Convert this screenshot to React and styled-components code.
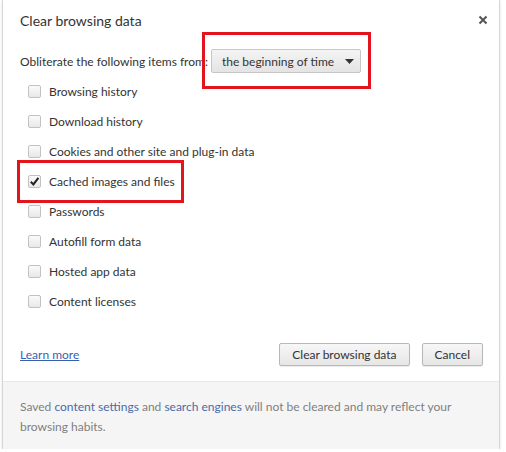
import React from 'react'
import styled, { createGlobalStyle } from 'styled-components'

const GlobalStyle = createGlobalStyle`
    body{
        margin: 0;
        background: #ffffff;
        font-family: Lato, "Open Sans", sans-serif;
    }
`

const items = [
    { label: 'Browsing history' },
    { label: 'Download history' },
    { label: 'Cookies and other site and plug-in data' },
    { label: 'Cached images and files', checked: true, marked: true },
    { label: 'Passwords' },
    { label: 'Autofill form data' },
    { label: 'Hosted app data' },
    { label: 'Content licenses' },
]

const App = () => {
    return (
        <>
            <GlobalStyle />
            <Dialog>
                <Header>
                    <h1>Clear browsing data</h1>
                    <Close aria-label="close">
                        <svg width="10" height="10" viewBox="0 0 10 10">
                            <path d="M1.5 1.5 L8.5 8.5 M8.5 1.5 L1.5 8.5" stroke="#555" strokeWidth="2" />
                        </svg>
                    </Close>
                </Header>
                <FromRow>
                    <span>Obliterate the following items from:</span>
                    <Marked>
                        <Select>
                            the beginning of time
                            <svg width="9" height="5" viewBox="0 0 9 5">
                                <path d="M0 0 L9 0 L4.5 5 Z" fill="#333" />
                            </svg>
                        </Select>
                        <Highlight $top={-17} $left={-9} $right={-10} $bottom={-16} />
                    </Marked>
                </FromRow>
                <List>
                    {items.map((item) => (
                        <Row key={item.label}>
                            <Marked>
                                <Box $checked={item.checked}>
                                    {item.checked && (
                                        <svg width="11" height="11" viewBox="0 0 11 11">
                                            <path d="M1.8 5.8 L4.4 8.4 L9.4 1.8" stroke="#222" strokeWidth="2" fill="none" />
                                        </svg>
                                    )}
                                </Box>
                                <span>{item.label}</span>
                                {item.marked && <Highlight $top={-14} $left={-11} $right={-9} $bottom={-14} />}
                            </Marked>
                        </Row>
                    ))}
                </List>
                <Actions>
                    <a href="#">Learn more</a>
                    <Buttons>
                        <Button>Clear browsing data</Button>
                        <Button>Cancel</Button>
                    </Buttons>
                </Actions>
                <Footer>
                    <span>Saved </span><a href="#">content settings</a><span> and </span><a href="#">search engines</a><span> will not be cleared and may reflect your browsing habits.</span>
                </Footer>
            </Dialog>
        </>
    )
}

export default App

const Dialog = styled.div`
    margin-left: 3px;
    width: 496px;
    height: 449px;
    background: #fff;
    box-shadow: 0 0 0 1px #d6d6d6, 0 1px 3px rgba(0,0,0,0.25);
    display: flex;
    flex-direction: column;
    color: #333;
    font-size: 12px;
    overflow: hidden;
`

const Header = styled.div`
    display: flex;
    justify-content: space-between;
    align-items: flex-start;
    padding: 10px 11px 0 17px;
    h1{
        margin: 0;
        font-size: 14px;
        font-weight: 400;
        line-height: 22px;
        color: #333;
    }
`

const Close = styled.span`
    display: flex;
    padding-top: 5px;
`

const FromRow = styled.div`
    display: flex;
    align-items: center;
    gap: 3px;
    padding: 17px 17px 0;
    white-space: nowrap;
`

const Marked = styled.div`
    position: relative;
    display: flex;
    align-items: center;
    gap: 8px;
`

const Highlight = styled.span`
    position: absolute;
    top: ${p => p.$top}px;
    left: ${p => p.$left}px;
    right: ${p => p.$right}px;
    bottom: ${p => p.$bottom}px;
    border: 3px solid #e3141c;
    pointer-events: none;
`

const Select = styled.div`
    display: flex;
    align-items: center;
    justify-content: space-between;
    flex-shrink: 0;
    box-sizing: border-box;
    width: 150px;
    height: 24px;
    padding: 0 6px 0 10px;
    border: 1px solid #c6c6c6;
    border-radius: 2px;
    background: linear-gradient(#f4f4f4, #e4e4e4);
    color: #333;
    white-space: nowrap;
`

const List = styled.div`
    display: flex;
    flex-direction: column;
    padding: 3px 0 0 25px;
`

const Row = styled.div`
    height: 30px;
    display: flex;
    align-items: center;
`

const Box = styled.span`
    box-sizing: border-box;
    width: 13px;
    height: 13px;
    border: 1px solid #c2c2c2;
    border-radius: 2px;
    background: linear-gradient(#fafafa, #e8e8e8);
    display: flex;
    align-items: center;
    justify-content: center;
`

const Actions = styled.div`
    display: flex;
    justify-content: space-between;
    align-items: center;
    padding: 27px 16px 15px 17px;
    a{
        color: #3a5fae;
        text-decoration: underline;
    }
`

const Buttons = styled.div`
    display: flex;
    gap: 12px;
`

const Button = styled.button`
    height: 23px;
    padding: 0 12px;
    border: 1px solid #b8b8b8;
    border-radius: 2px;
    background: linear-gradient(#f7f7f7, #e6e6e6);
    box-shadow: 0 1px 1px rgba(0,0,0,0.08);
    font-family: inherit;
    font-size: 12px;
    color: #333;
`

const Footer = styled.div`
    flex: 1;
    background: #f5f5f5;
    border-top: 1px solid #e8e8e8;
    padding: 15px 30px 0 17px;
    line-height: 20px;
    color: #7f7f7f;
    a{
        color: #4a6aab;
        text-decoration: none;
    }
`
